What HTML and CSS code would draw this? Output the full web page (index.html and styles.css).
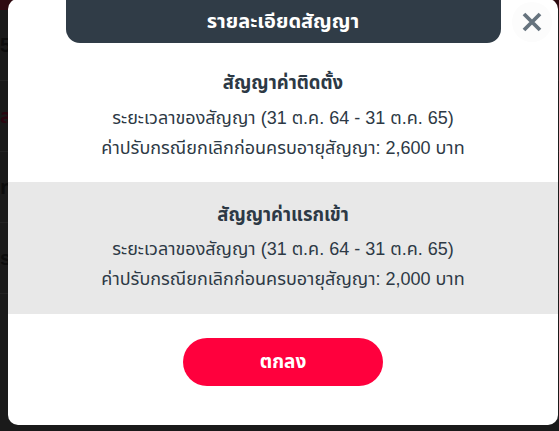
FILE: index.html
```html
<!DOCTYPE html>
<html lang="th">
<head>
<meta charset="utf-8">
<title>รายละเอียดสัญญา</title>
<link rel="stylesheet" href="styles.css">
</head>
<body>
<div class="page">
  <div class="page-top"></div>
  <div class="page-rows">
    <div class="page-row">5</div>
    <div class="page-row accent">ส</div>
    <div class="page-row">ท</div>
    <div class="page-row">s</div>
  </div>
</div>
<div class="overlay">
  <div class="modal">
    <div class="tab">รายละเอียดสัญญา</div>
    <button class="close" aria-label="ปิด">
      <svg width="22" height="22" viewBox="0 0 22 22"><path d="M3 3 L19 19 M19 3 L3 19" stroke="#66737e" stroke-width="3.8" stroke-linecap="butt" fill="none"/></svg>
    </button>
    <div class="section first">
      <div class="heading">สัญญาค่าติดตั้ง</div>
      <div class="line">ระยะเวลาของสัญญา (31 ต.ค. 64 - 31 ต.ค. 65)</div>
      <div class="line">ค่าปรับกรณียกเลิกก่อนครบอายุสัญญา: 2,600 บาท</div>
    </div>
    <div class="section alt">
      <div class="heading">สัญญาค่าแรกเข้า</div>
      <div class="line">ระยะเวลาของสัญญา (31 ต.ค. 64 - 31 ต.ค. 65)</div>
      <div class="line">ค่าปรับกรณียกเลิกก่อนครบอายุสัญญา: 2,000 บาท</div>
    </div>
    <div class="actions">
      <button class="ok">ตกลง</button>
    </div>
  </div>
</div>
</body>
</html>
```

FILE: styles.css
```css
html, body {
  margin: 0;
  padding: 0;
  width: 559px;
  height: 431px;
  overflow: hidden;
  background: #1a1a1a;
  font-family: "Liberation Sans", "Noto Sans Thai", "Noto Sans", sans-serif;
}
.page {
  width: 559px;
  height: 431px;
}
.page-top {
  height: 10px;
  background: #2e0a10;
}
.page-rows {
  display: flex;
  flex-direction: column;
}
.page-row {
  height: 70px;
  border-bottom: 1px solid #232323;
  color: #0c0c0c;
  font-weight: 700;
  font-size: 20px;
  line-height: 70px;
}
.page-row.accent { color: #2a0610; }
.overlay {
  position: absolute;
  left: 0;
  top: 0;
  width: 559px;
  height: 431px;
}
.modal {
  position: absolute;
  left: 8px;
  top: -1px;
  width: 550px;
  height: 426px;
  background: #ffffff;
  border-radius: 10px;
  display: flex;
  flex-direction: column;
  overflow: hidden;
}
.tab {
  align-self: center;
  width: 435px;
  height: 44px;
  background: #303c47;
  border-radius: 0 0 14px 14px;
  color: #ffffff;
  font-weight: 700;
  font-size: 20px;
  line-height: 44px;
  text-align: center;
}
.close {
  position: absolute;
  right: 6px;
  top: 3px;
  width: 40px;
  height: 40px;
  border: none;
  border-radius: 50%;
  background: #fcfcfc;
  padding: 0;
  display: flex;
  align-items: center;
  justify-content: center;
}
.section {
  display: flex;
  flex-direction: column;
  align-items: center;
  padding: 18px 0 20px;
  color: #2d3945;
}
.section.first {
  padding: 25px 0 19px;
}
.section.alt {
  background: #e8e8e8;
}
.heading {
  font-weight: 700;
  font-size: 18.5px;
  line-height: 30px;
  margin-bottom: 4px;
}
.section.first .heading {
  margin-bottom: 5px;
}
.line {
  font-size: 18px;
  line-height: 30px;
}
.actions {
  display: flex;
  justify-content: center;
  padding-top: 24px;
}
.ok {
  width: 200px;
  height: 48px;
  border: none;
  border-radius: 24px;
  background: #ff003d;
  color: #ffffff;
  font-family: inherit;
  font-weight: 700;
  font-size: 19px;
}
```
